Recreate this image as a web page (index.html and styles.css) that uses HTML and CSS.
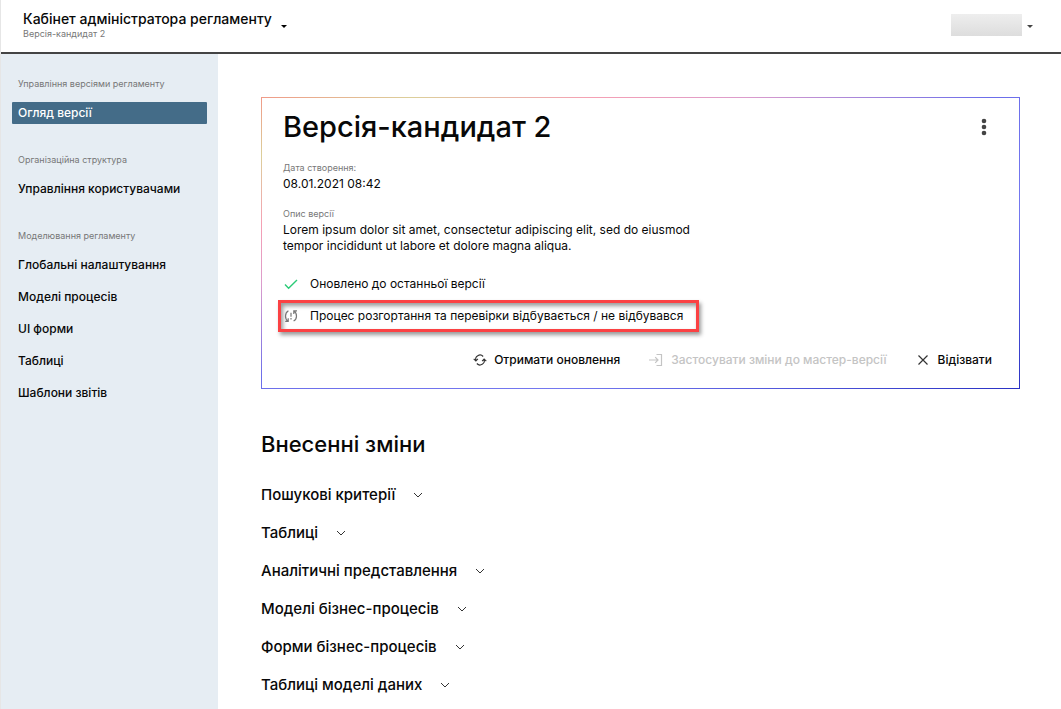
FILE: index.html
```
<!DOCTYPE html>
<html lang="uk">
<head>
  <meta charset="UTF-8">
  <meta name="viewport" content="width=device-width, initial-scale=1.0">
  <title>Кабінет адміністратора регламенту</title>
  <link rel="stylesheet" href="styles.css">
</head>
<body>
  <header class="header">
    <button class="header-title" type="button">
      <span class="header-text">
        <span class="header-name">Кабінет адміністратора регламенту</span>
        <span class="header-version">Версія-кандидат 2</span>
      </span>
      <span class="caret"></span>
    </button>
    <button class="user-menu" type="button" aria-label="Меню користувача">
      <span class="user-name"></span>
      <span class="caret caret-user"></span>
    </button>
  </header>

  <div class="layout">
    <nav class="sidebar">
      <section class="nav-group">
        <h2 class="nav-title">Управління версіями регламенту</h2>
        <a class="nav-link active" href="#overview">Огляд версії</a>
      </section>
      <section class="nav-group">
        <h2 class="nav-title">Організаційна структура</h2>
        <a class="nav-link" href="#users">Управління користувачами</a>
      </section>
      <section class="nav-group">
        <h2 class="nav-title">Моделювання регламенту</h2>
        <a class="nav-link" href="#settings">Глобальні налаштування</a>
        <a class="nav-link" href="#processes">Моделі процесів</a>
        <a class="nav-link" href="#forms">UI форми</a>
        <a class="nav-link" href="#tables">Таблиці</a>
        <a class="nav-link" href="#reports">Шаблони звітів</a>
      </section>
    </nav>

    <main class="content">
      <section class="card">
        <div class="card-head">
          <h1>Версія-кандидат 2</h1>
          <button class="more" type="button" aria-label="Більше">
            <svg width="6" height="18" viewBox="0 0 6 18" fill="#444"><circle cx="3" cy="3" r="2.3"/><circle cx="3" cy="9" r="2.3"/><circle cx="3" cy="15" r="2.3"/></svg>
          </button>
        </div>

        <dl class="details">
          <dt>Дата створення:</dt>
          <dd>08.01.2021 08:42</dd>
          <dt>Опис версії</dt>
          <dd>Lorem ipsum dolor sit amet, consectetur adipiscing elit, sed do eiusmod tempor incididunt ut labore et dolore magna aliqua.</dd>
        </dl>

        <ul class="statuses">
          <li class="status">
            <svg width="16" height="16" viewBox="0 0 16 16" fill="none" stroke="#2ccb78" stroke-width="1.4"><path d="M2 8.6l3.6 3.6L14 3.9"/></svg>
            Оновлено до останньої версії
          </li>
          <li class="status status-marked">
            <svg width="16" height="16" viewBox="0 0 16 16" fill="none" stroke="#777" stroke-width="1.2"><path d="M5.400 2.800C1.600 5 1.600 11 5 13.200M2.200 13.300h3v-3"/><path d="M10.600 13C14.400 11 14.400 5.400 11 3M14 2.800h-3.200v3.200"/><path d="M8 4.800v4M8 10v1.400"/></svg>
            Процес розгортання та перевірки відбувається / не відбувався
          </li>
        </ul>

        <div class="actions">
          <button class="action" type="button">
            <svg width="14" height="14" viewBox="0 0 16 16" fill="none" stroke="#333" stroke-width="1.3"><path d="M11.600 4A4.900 4.900 0 0 0 3.300 8.800M.8 6.700l2.500 2.300 2.300-2.300"/><path d="M4.400 12A4.900 4.900 0 0 0 12.700 7.200M10.400 9.300l2.300-2.300 2.500 2.300"/></svg>
            Отримати оновлення
          </button>
          <button class="action" type="button" disabled>
            <svg width="16" height="16" viewBox="0 0 16 16" fill="none" stroke="#c4c4c4" stroke-width="1.2"><path d="M1 8h9M7.200 5.200L10 8l-2.800 2.800M8.500 2.500h5v11h-5"/></svg>
            Застосувати зміни до мастер-версії
          </button>
          <button class="action" type="button">
            <svg width="16" height="16" viewBox="0 0 16 16" fill="none" stroke="#333" stroke-width="1.2"><path d="M3.500 3.500l9 9M12.500 3.500l-9 9"/></svg>
            Відізвати
          </button>
        </div>
      </section>

      <section class="changes">
        <h2>Внесенні зміни</h2>
        <button class="change" type="button">Пошукові критерії <svg class="chevron" width="10" height="6" viewBox="0 0 10 6"><path d="M1 1l4 4 4-4"/></svg></button>
        <button class="change" type="button">Таблиці <svg class="chevron" width="10" height="6" viewBox="0 0 10 6"><path d="M1 1l4 4 4-4"/></svg></button>
        <button class="change" type="button">Аналітичні представлення <svg class="chevron" width="10" height="6" viewBox="0 0 10 6"><path d="M1 1l4 4 4-4"/></svg></button>
        <button class="change" type="button">Моделі бізнес-процесів <svg class="chevron" width="10" height="6" viewBox="0 0 10 6"><path d="M1 1l4 4 4-4"/></svg></button>
        <button class="change" type="button">Форми бізнес-процесів <svg class="chevron" width="10" height="6" viewBox="0 0 10 6"><path d="M1 1l4 4 4-4"/></svg></button>
        <button class="change" type="button">Таблиці моделі даних <svg class="chevron" width="10" height="6" viewBox="0 0 10 6"><path d="M1 1l4 4 4-4"/></svg></button>
      </section>
    </main>
  </div>
</body>
</html>
```
FILE: styles.css
```
:root {
  --text-color: #080808;
  --text-light: #777777;
  --sidebar-color: #e6edf3;
  --active-color: #446c88;
  --disabled-color: #c4c4c4;
  --mark-color: #fb4143;
}

* {
  margin: 0;
  padding: 0;
  box-sizing: border-box;
}

body {
  display: flex;
  flex-direction: column;
  min-height: 100vh;
  border-left: 1px solid #e6e6e6;
  font-family: Inter, "Noto Sans", sans-serif;
  font-size: 12px;
  line-height: 16px;
  color: var(--text-color);
  background-color: #ffffff;
}

button {
  font: inherit;
  color: inherit;
  background: none;
  border: none;
  cursor: pointer;
}

/* Header */
.header {
  display: flex;
  justify-content: space-between;
  align-items: flex-start;
  padding: 11px 28px 12px 22px;
  border-bottom: 2px solid #444444;
}

.header-title {
  display: flex;
  align-items: center;
  gap: 9px;
  text-align: left;
}

.header-name {
  display: block;
  font-size: 14px;
  font-weight: 500;
}

.header-version {
  display: block;
  font-size: 9px;
  line-height: 13px;
  color: var(--text-light);
}

.caret {
  margin-top: 2px;
  border: 3px solid transparent;
  border-top-color: #000000;
  border-bottom: none;
}

.caret-user {
  border-top-color: #444444;
}

.user-menu {
  display: flex;
  align-items: center;
  gap: 5px;
  padding-top: 3px;
}

.user-name {
  width: 71px;
  height: 22px;
  background: linear-gradient(#eeeeee, #dddddd);
}

/* Sidebar */
.layout {
  display: flex;
  flex: 1;
}

.sidebar {
  flex: none;
  width: 217px;
  padding: 22px 11px;
  background-color: var(--sidebar-color);
}

.nav-group {
  margin-bottom: 28px;
}

.nav-title {
  padding-left: 6px;
  margin-bottom: 10px;
  font-size: 9px;
  font-weight: 400;
  color: var(--text-light);
}

.nav-link {
  display: block;
  padding: 3px 6px;
  margin-bottom: 10px;
  border-radius: 1px;
  font-weight: 500;
  color: var(--text-color);
  text-decoration: none;
}

.nav-link:last-child {
  margin-bottom: 0;
}

.nav-link.active {
  background-color: var(--active-color);
  color: #ffffff;
}

/* Card */
.content {
  flex: 1;
  padding: 43px 41px 0 43px;
}

.card {
  padding: 13px 21px 20px;
  border: 1px solid transparent;
  background:
    linear-gradient(#ffffff, #ffffff) padding-box,
    linear-gradient(to bottom right, #f09a88, #dccf9a 10%, #f5a0b4 22%, #dc9ccc 32%, #6c6eea 48%, #7478f0 70%, #2a32c4) border-box;
}

.card-head {
  display: flex;
  justify-content: space-between;
  align-items: center;
  padding-right: 11px;
  margin-bottom: 17px;
}

h1 {
  font-size: 29px;
  font-weight: 500;
  line-height: 32px;
}

.more {
  display: flex;
}

.details {
  max-width: 440px;
}

.details dt {
  font-size: 9px;
  color: var(--text-light);
}

.details dd {
  margin-bottom: 14px;
}

.statuses {
  list-style: none;
}

.status {
  display: flex;
  align-items: center;
  gap: 11px;
  margin-top: 22px;
}

.status-marked {
  width: fit-content;
  padding: 5px 13px 5px 2px;
  margin: 8px 0 0 -5px;
  border: 3px solid var(--mark-color);
  box-shadow: 2px 3px 4px rgba(0, 0, 0, 0.4), inset 2px 3px 4px rgba(0, 0, 0, 0.4);
}

.actions {
  display: flex;
  justify-content: flex-end;
  gap: 28px;
  padding: 20px 6px 0 0;
}

.action {
  display: flex;
  align-items: center;
  gap: 7px;
  font-weight: 500;
}

.action:disabled {
  color: var(--disabled-color);
  cursor: default;
}

/* Changes */
.changes {
  display: flex;
  flex-direction: column;
  align-items: flex-start;
  gap: 18px;
  padding-top: 42px;
}

.changes h2 {
  margin-bottom: 10px;
  font-size: 22px;
  font-weight: 500;
  line-height: 26px;
}

.change {
  display: flex;
  align-items: center;
  gap: 18px;
  font-size: 15px;
  font-weight: 500;
  line-height: 20px;
}

.chevron {
  fill: none;
  stroke: #333333;
}
```
